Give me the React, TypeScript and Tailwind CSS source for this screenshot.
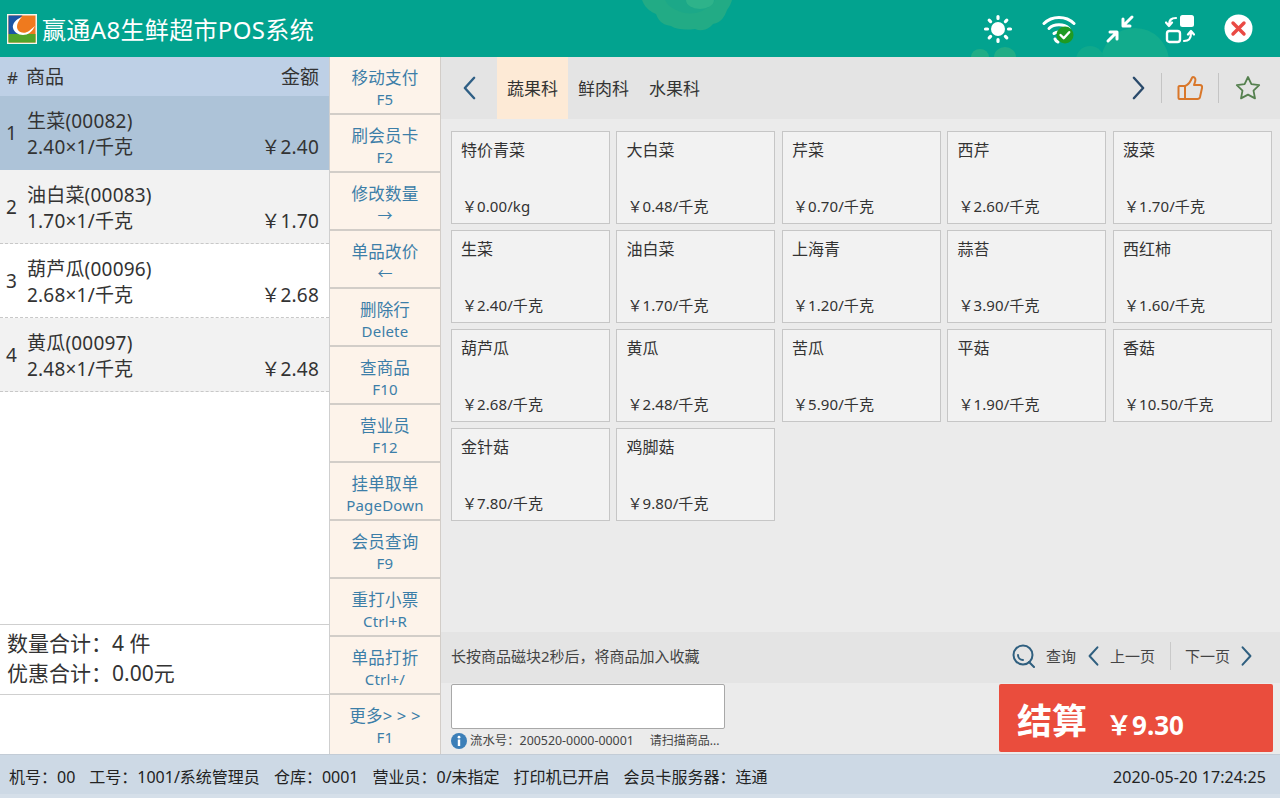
import { ReactNode } from 'react';

const font = { fontFamily: '"Noto Sans", "Noto Sans CJK SC", sans-serif' };

const cartItems = [
  { no: 1, name: '生菜(00082)', spec: '2.40×1/千克', amount: '2.40', active: true },
  { no: 2, name: '油白菜(00083)', spec: '1.70×1/千克', amount: '1.70', shaded: true },
  { no: 3, name: '葫芦瓜(00096)', spec: '2.68×1/千克', amount: '2.68' },
  { no: 4, name: '黄瓜(00097)', spec: '2.48×1/千克', amount: '2.48', shaded: true },
];

const actions = [
  ['移动支付', 'F5'],
  ['刷会员卡', 'F2'],
  ['修改数量', '→'],
  ['单品改价', '←'],
  ['删除行', 'Delete'],
  ['查商品', 'F10'],
  ['营业员', 'F12'],
  ['挂单取单', 'PageDown'],
  ['会员查询', 'F9'],
  ['重打小票', 'Ctrl+R'],
  ['单品打折', 'Ctrl+/'],
  ['更多> > >', 'F1'],
];

const goods = [
  ['特价青菜', '0.00/kg'],
  ['大白菜', '0.48/千克'],
  ['芹菜', '0.70/千克'],
  ['西芹', '2.60/千克'],
  ['菠菜', '1.70/千克'],
  ['生菜', '2.40/千克'],
  ['油白菜', '1.70/千克'],
  ['上海青', '1.20/千克'],
  ['蒜苔', '3.90/千克'],
  ['西红柿', '1.60/千克'],
  ['葫芦瓜', '2.68/千克'],
  ['黄瓜', '2.48/千克'],
  ['苦瓜', '5.90/千克'],
  ['平菇', '1.90/千克'],
  ['香菇', '10.50/千克'],
  ['金针菇', '7.80/千克'],
  ['鸡脚菇', '9.80/千克'],
];

const statusItems = ['机号：00', '工号：1001/系统管理员', '仓库：0001', '营业员：0/未指定', '打印机已开启', '会员卡服务器：连通'];

function Chevron({ dir, className }: { dir: 'left' | 'right'; className: string }) {
  return (
    <svg viewBox="0 0 14 26" className={className} fill="none" stroke="currentColor" strokeWidth="2.6" strokeLinecap="round" strokeLinejoin="round">
      <path d={dir === 'left' ? 'M12 2 2 13l10 11' : 'M2 2l10 11L2 24'} />
    </svg>
  );
}

function Logo() {
  return (
    <svg viewBox="0 0 30 30" className="w-[30px] h-[30px] shrink-0">
      <rect width="30" height="30" fill="#f4f6ee" />
      <rect x="1.500" y="1.500" width="27" height="27" fill="#ef7a1e" />
      <path d="M1.500 1.500h14C10 6 8 11 9 15c1 3 4 5 8 5H1.500Z" fill="#1c55a5" />
      <path d="M1.500 20H28.500V28.500H1.500Z" fill="#52a52a" />
      <path d="M15 3C10 8 9 13 11 16c2 3 7 4 11 1l6-5c-3 6-7 9-12 9-5 0-9-3-10-7-1-4 3-9 9-11Z" fill="#fff" />
    </svg>
  );
}

function HeaderIcons() {
  return (
    <div className="flex items-center mr-[14px]">
      <div className="w-[60px] flex justify-center">
        <svg viewBox="0 0 30 30" className="w-[30px] h-[30px]" fill="#fff">
          <circle cx="15" cy="15" r="7" />
          <g stroke="#fff" strokeWidth="3.200" strokeLinecap="round">
            <path d="M15 2.500v2M15 25.500v2M2.500 15h2M25.500 15h2M6.200 6.200l1.400 1.400M22.400 22.400l1.400 1.400M6.200 23.800l1.400-1.400M22.400 7.600l1.400-1.400" />
          </g>
        </svg>
      </div>
      <div className="w-[62px] flex justify-center">
        <svg viewBox="0 0 34 30" className="w-[34px] h-[30px]" fill="none">
          <g stroke="#fff" strokeWidth="3" strokeLinecap="round">
            <path d="M2 9.500C10 1.500 24 1.500 32 9.500" />
            <path d="M7 14.500c5-5 15-5 20 0" />
            <path d="M12 19.500c2.500-2 7.500-2 10 0" />
            <path d="M13 25c.5 1.500 1.500 2.500 3 3" />
          </g>
          <circle cx="23" cy="21" r="8.500" fill="#1f9a22" />
          <path d="m18.500 21 3.200 3.200 5.500-6" stroke="#fff" strokeWidth="2.400" strokeLinecap="round" strokeLinejoin="round" />
        </svg>
      </div>
      <div className="w-[60px] flex justify-center">
        <svg viewBox="0 0 30 30" className="w-[30px] h-[30px]" fill="none" stroke="#fff" strokeWidth="3" strokeLinecap="round" strokeLinejoin="round">
          <path d="M27 3 18 12M18 5v7h7" />
          <path d="M3 27l9-9M5 18h7v7" />
        </svg>
      </div>
      <div className="w-[60px] flex justify-center">
        <svg viewBox="0 0 30 30" className="w-[30px] h-[30px]" fill="none">
          <rect x="15" y="1" width="14" height="12" rx="2.500" fill="#fff" />
          <rect x="2" y="17" width="13" height="11" rx="2.500" stroke="#fff" strokeWidth="2.400" />
          <path d="M11 4C6 4 4 6 4 11M1 8.500 4 12l3-3.500M19 27c5 0 7-2 7-8M23 20.500l3-3.500 3 3.500" stroke="#fff" strokeWidth="2.200" strokeLinecap="round" strokeLinejoin="round" />
        </svg>
      </div>
      <div className="w-[56px] flex justify-center">
        <svg viewBox="0 0 29 29" className="w-[29px] h-[29px]">
          <circle cx="14.500" cy="14.500" r="14" fill="#fff" />
          <path d="m9 9 11 11M20 9 9 20" stroke="#ea4a44" strokeWidth="3.400" strokeLinecap="round" />
        </svg>
      </div>
    </div>
  );
}

function HeaderDecor() {
  return (
    <svg viewBox="0 0 1280 57" className="absolute inset-0 w-[1280px] h-[57px]" aria-hidden="true">
      <path d="M642 0c4 10 10 12 14 14 3 9 9 11 15 12 6 4 16 4 24 3 7 3 14 0 18-5 8-1 12-8 14-14 2-3 4-6 5-10Z" fill="#22ab85" />
      <path d="M665 0c4 8 12 11 20 13 10 2 22-2 30-13Z" fill="#1ca888" />
      <ellipse cx="700" cy="0" rx="14" ry="9" fill="#2eb38a" />
      <ellipse cx="980" cy="57" rx="9" ry="8" fill="#21ad86" />
      <ellipse cx="1005" cy="57" rx="11" ry="10" fill="#21ad86" />
      <circle cx="1135" cy="62" r="34" fill="#12ab8d" />
      <circle cx="1090" cy="60" r="14" fill="#10a98c" />
    </svg>
  );
}

function ActionButton({ label, hint }: { label: string; hint: string }) {
  return (
    <button className="flex flex-col items-center h-[58px] w-full shrink-0 bg-[#fdf3ea] border-b-2 border-[#d2cdc8] last:border-b-0 pt-[10px] text-[#3c7ea8]">
      <span className="text-[16.500px] leading-[22px] tracking-[0.2px]">{label}</span>
      <span className="text-[15px] leading-[20px] tracking-[0.2px]">{hint}</span>
    </button>
  );
}

function Divider() {
  return <span className="w-px h-[30px] bg-[#c4c4c4]" />;
}

function Cell({ children }: { children: ReactNode }) {
  return <div className="bg-[#f2f2f2] border border-[#c6c6c6] h-[93px] px-[9px] relative">{children}</div>;
}

export default function App() {
  return (
    <div className="w-[1280px] h-[800px] overflow-hidden flex flex-col bg-white text-[#333]" style={font}>
      <header className="relative h-[57px] shrink-0 bg-[#02a38f] flex items-center justify-between">
        <HeaderDecor />
        <div className="relative flex items-center gap-[5px] pl-[7px] text-white">
          <Logo />
          <span className="text-[24px] leading-[30px] mt-[2px] tracking-[0.35px]">赢通A8生鲜超市POS系统</span>
        </div>
        <div className="relative">
          <HeaderIcons />
        </div>
      </header>

      <div className="flex flex-1 min-h-0">
        <aside className="w-[330px] shrink-0 flex flex-col border-r border-[#cfcfcf]">
          <div className="h-[39px] shrink-0 bg-[#bed0e6] flex items-center justify-between pl-[7px] pr-[10px] pt-[2px] text-[19px] text-[#333]">
            <div className="flex items-center gap-[8px]">
              <span className="text-[17px]">#</span>
              <span>商品</span>
            </div>
            <span>金额</span>
          </div>
          <div className="flex-1 min-h-0">
            {cartItems.map((item) => (
              <div
                key={item.no}
                className={`h-[74px] flex items-center pl-[6px] pr-[10px] text-[19px] leading-[26px] tracking-[0.2px] border-b border-dashed ${
                  item.active ? 'bg-[#adc3d8] border-transparent' : item.shaded ? 'bg-[#f2f2f2] border-[#c8c8c8]' : 'bg-white border-[#c8c8c8]'
                }`}
              >
                <span className="w-[21px] shrink-0">{item.no}</span>
                <div className="flex-1 pt-[3px]">
                  <div>{item.name}</div>
                  <div className="flex justify-between">
                    <span>{item.spec}</span>
                    <span>￥{item.amount}</span>
                  </div>
                </div>
              </div>
            ))}
          </div>
          <div className="h-[71px] shrink-0 border-y border-[#cfcfcf] pl-[7px] pb-[3px] flex flex-col justify-center text-[21px] leading-[30px] text-[#333]">
            <div>数量合计：4 件</div>
            <div>优惠合计：0.00元</div>
          </div>
          <div className="h-[59px] shrink-0" />
        </aside>

        <nav className="w-[111px] shrink-0 flex flex-col border-r border-[#d2cdc8] bg-[#fdf3ea]">
          {actions.map(([label, hint]) => (
            <ActionButton key={label} label={label} hint={hint} />
          ))}
        </nav>

        <main className="flex-1 min-w-0 bg-[#ebebeb] flex flex-col">
          <div className="h-[62px] shrink-0 bg-[#e4e4e4] flex items-center">
            <div className="w-[56px] flex justify-center">
              <Chevron dir="left" className="w-[13px] h-[26px] text-[#2f5f85]" />
            </div>
            <div className="flex self-stretch text-[17px] text-[#333]">
              <span className="w-[71px] bg-[#fdead6] flex items-center justify-center pt-[1px]">蔬果科</span>
              <span className="w-[71px] flex items-center justify-center pt-[1px]">鲜肉科</span>
              <span className="w-[71px] flex items-center justify-center pt-[1px]">水果科</span>
            </div>
            <div className="ml-auto flex items-center">
              <Chevron dir="right" className="w-[13px] h-[26px] text-[#2a4a6b] mr-[16px]" />
              <Divider />
              <svg viewBox="0 0 26 26" className="w-[26px] h-[26px] mx-[15px]" fill="none" stroke="#d9772a" strokeWidth="2" strokeLinejoin="round" strokeLinecap="round">
                <path d="M8 11v13H2.500a1 1 0 0 1-1-1V12a1 1 0 0 1 1-1H8Z" />
                <path d="M8 11c3-1 5-4 6-6 1-2 1-3 2-3 2 0 3 2 2 5l-1 3h6c1.500 0 2.500 1.200 2 3l-2 9c-.3 1.200-1 2-2.500 2H8" />
              </svg>
              <Divider />
              <svg viewBox="0 0 26 26" className="w-[26px] h-[26px] ml-[16px] mr-[19px]" fill="none" stroke="#55804f" strokeWidth="1.800" strokeLinejoin="round">
                <path d="m13 2 3.400 7.200 7.800 1-5.700 5.400 1.500 7.800L13 19.600l-7 3.800 1.500-7.800L1.800 10.200l7.800-1Z" />
              </svg>
            </div>
          </div>

          <div className="flex-1 min-h-0 pt-[12px] pl-[9.900px]">
            <div className="grid grid-cols-[repeat(5,159px)] gap-x-[6.500px] gap-y-[6px]">
              {goods.map(([name, price]) => (
                <Cell key={name}>
                  <div className="text-[16px] leading-[20px] pt-[8px] text-[#333]">{name}</div>
                  <div className="absolute left-[10px] bottom-[7px] text-[15px] leading-[20px] text-[#333] tracking-[0.1px]">￥{price}</div>
                </Cell>
              ))}
            </div>
          </div>

          <div className="h-[51px] shrink-0 bg-[#e4e4e4] flex items-center pl-[10px] pr-[28px] pb-[3px] text-[15px] text-[#444]">
            <span>长按商品磁块2秒后，将商品加入收藏</span>
            <div className="ml-auto flex items-center">
              <svg viewBox="0 0 24 24" className="w-[24px] h-[24px] mr-[10px]" fill="none" stroke="#2f5f7f" strokeWidth="2" strokeLinecap="round">
                <circle cx="11" cy="11" r="9.500" />
                <path d="M6 11a5 5 0 0 0 5 5M17 18l5 5" />
              </svg>
              <span>查询</span>
              <Chevron dir="left" className="w-[11px] h-[22px] text-[#2f5f7f] ml-[12px] mr-[11px]" />
              <span>上一页</span>
              <span className="w-px h-[28px] bg-[#c9c9c9] ml-[15px] mr-[14px]" />
              <span>下一页</span>
              <Chevron dir="right" className="w-[11px] h-[22px] text-[#2f5f7f] ml-[11px]" />
            </div>
          </div>

          <div className="h-[71px] shrink-0 flex pl-[10px] pr-[7px] pt-[1px]">
            <div className="w-[274px]">
              <input className="w-full h-[45px] bg-white border border-[#a8a8a8] rounded-[2px] block outline-none" />
              <div className="flex items-center h-[24px] text-[12px] text-[#444]">
                <svg viewBox="0 0 16 16" className="w-[16px] h-[16px] mr-[3px]">
                  <circle cx="8" cy="8" r="8" fill="#3c7fb8" />
                  <rect x="6.800" y="6.500" width="2.400" height="6.500" fill="#fff" />
                  <circle cx="8" cy="4.200" r="1.400" fill="#fff" />
                </svg>
                <span className="text-[12.400px]">流水号：200520-0000-00001</span>
                <span className="ml-[16px]">请扫描商品...</span>
              </div>
            </div>
            <button className="ml-auto w-[274px] h-[68px] bg-[#ea4d3d] rounded-[2px] flex items-center pl-[18px] text-white font-bold">
              <span className="text-[35px] leading-none mt-[4px]">结算</span>
              <span className="text-[26px] leading-none ml-[19px] mt-[14px]">￥9.30</span>
            </button>
          </div>
        </main>
      </div>

      <footer className="h-[44px] mb-[2px] shrink-0 bg-[#cdd9e5] border-t border-[#c3ccd6] border-b-[4px] border-b-[#d5dfe9] flex items-center justify-between pl-[9px] pr-[14px] pt-[5px] text-[16px] text-[#222]">
        <div className="flex gap-[14px]">
          {statusItems.map((s) => (
            <span key={s}>{s}</span>
          ))}
        </div>
        <span className="tracking-[0.1px]">2020-05-20 17:24:25</span>
      </footer>
    </div>
  );
}
